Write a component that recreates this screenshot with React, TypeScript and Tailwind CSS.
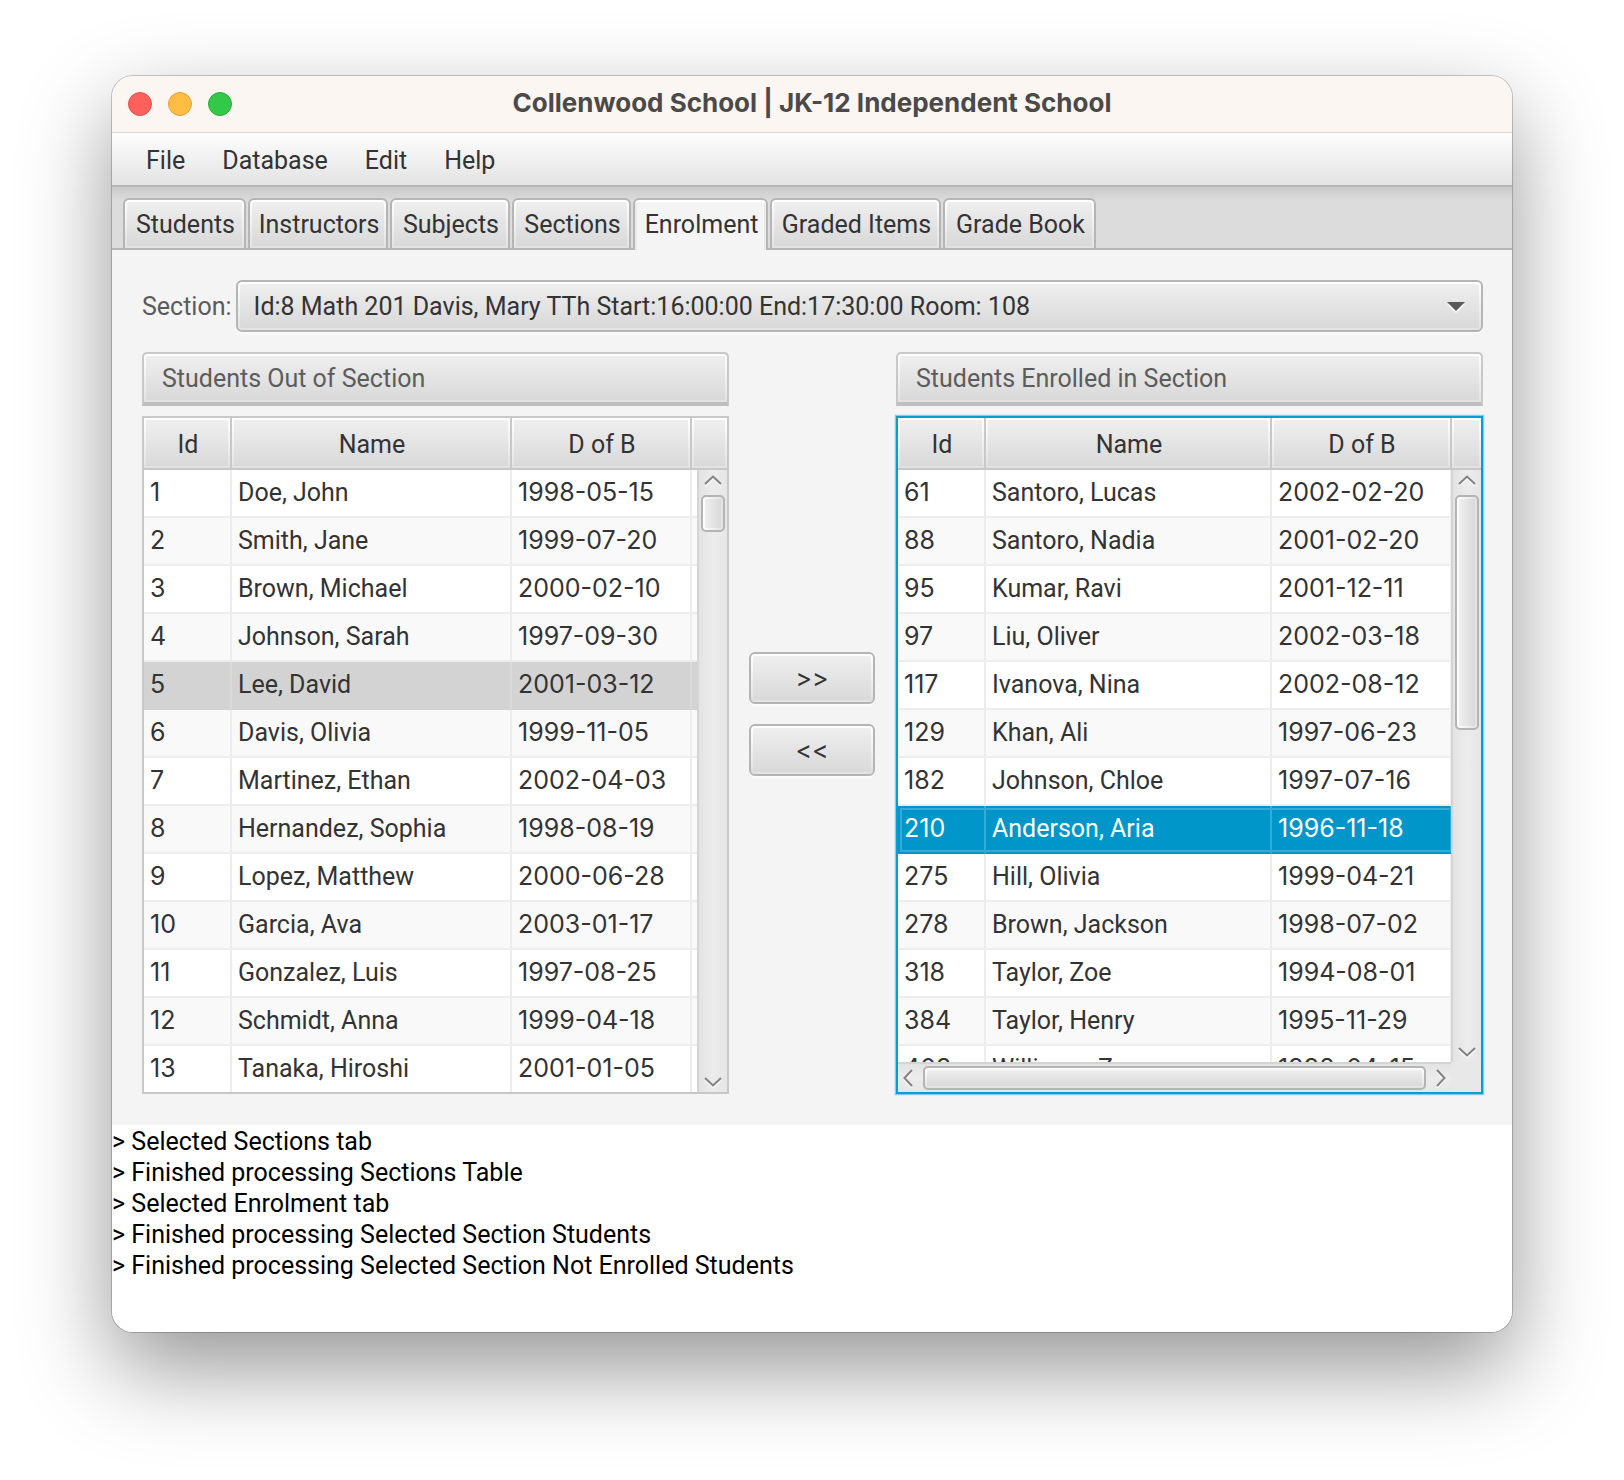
import React from "react";

type Student = [id: number, name: string, dob: string];

const menus = ["File", "Database", "Edit", "Help"];

const tabs = [
  { label: "Students", width: "w-[123px]" },
  { label: "Instructors", width: "w-[140px]" },
  { label: "Subjects", width: "w-[120px]" },
  { label: "Sections", width: "w-[119px]" },
  { label: "Enrolment", width: "w-[135px]" },
  { label: "Graded Items", width: "w-[171px]" },
  { label: "Grade Book", width: "w-[153px]" },
];

const outOfSection: Student[] = [
  [1, "Doe, John", "1998-05-15"],
  [2, "Smith, Jane", "1999-07-20"],
  [3, "Brown, Michael", "2000-02-10"],
  [4, "Johnson, Sarah", "1997-09-30"],
  [5, "Lee, David", "2001-03-12"],
  [6, "Davis, Olivia", "1999-11-05"],
  [7, "Martinez, Ethan", "2002-04-03"],
  [8, "Hernandez, Sophia", "1998-08-19"],
  [9, "Lopez, Matthew", "2000-06-28"],
  [10, "Garcia, Ava", "2003-01-17"],
  [11, "Gonzalez, Luis", "1997-08-25"],
  [12, "Schmidt, Anna", "1999-04-18"],
  [13, "Tanaka, Hiroshi", "2001-01-05"],
];

const enrolled: Student[] = [
  [61, "Santoro, Lucas", "2002-02-20"],
  [88, "Santoro, Nadia", "2001-02-20"],
  [95, "Kumar, Ravi", "2001-12-11"],
  [97, "Liu, Oliver", "2002-03-18"],
  [117, "Ivanova, Nina", "2002-08-12"],
  [129, "Khan, Ali", "1997-06-23"],
  [182, "Johnson, Chloe", "1997-07-16"],
  [210, "Anderson, Aria", "1996-11-18"],
  [275, "Hill, Olivia", "1999-04-21"],
  [278, "Brown, Jackson", "1998-07-02"],
  [318, "Taylor, Zoe", "1994-08-01"],
  [384, "Taylor, Henry", "1995-11-29"],
  [403, "Williams, Zoe", "1998-04-15"],
];

const log = [
  "Selected Sections tab",
  "Finished processing Sections Table",
  "Selected Enrolment tab",
  "Finished processing Selected Section Students",
  "Finished processing Selected Section Not Enrolled Students",
];

/* Raised surface: a bright two-pixel rim around a soft vertical gradient. */
const raised =
  "p-0.5 bg-[linear-gradient(#efefef,#d9d9d9),linear-gradient(#ffffff,#e2e2e2)] [background-clip:content-box,padding-box] [background-origin:content-box,padding-box]";
const raisedSide =
  "p-0.5 bg-[linear-gradient(90deg,#efefef,#d9d9d9),linear-gradient(90deg,#ffffff,#e2e2e2)] [background-clip:content-box,padding-box] [background-origin:content-box,padding-box]";

function Arrow({ d, wide }: { d: string; wide?: boolean }) {
  return (
    <svg
      aria-hidden="true"
      width={wide ? 18 : 10}
      height={wide ? 10 : 18}
      viewBox={wide ? "0 0 18 10" : "0 0 10 18"}
      fill="none"
      stroke="#838383"
      strokeWidth="2"
      className="drop-shadow-[0_2px_0_rgba(255,255,255,0.6)]"
    >
      <path d={d} />
    </svg>
  );
}

function VerticalBar({ thumb, bottom }: { thumb: string; bottom: string }) {
  return (
    <div
      className={`absolute right-0 top-[52px] flex w-[30px] flex-col items-center border-l-2 border-[#d4d4d4] bg-[linear-gradient(90deg,#e3e3e3,#ececec_50%,#e6e6e6)] pb-[5px] pt-[5px] ${bottom}`}
    >
      <button type="button" aria-label="Scroll up" className="flex">
        <Arrow wide d="M1 9 L9 1.5 L17 9" />
      </button>
      <div className={`mt-[10px] w-6 shrink-0 rounded-[5px] border-2 border-[#b4b4b4] ${raisedSide} ${thumb}`} />
      <button type="button" aria-label="Scroll down" className="mt-auto flex">
        <Arrow wide d="M1 1 L9 8.5 L17 1" />
      </button>
    </div>
  );
}

function HorizontalBar() {
  return (
    <div className="absolute inset-x-0 bottom-0 flex h-[30px] bg-[#e8e8e8]">
      <div className="flex flex-1 items-center border-t-2 border-[#d4d4d4] bg-[linear-gradient(#e3e3e3,#ececec_50%,#e6e6e6)] px-[5px]">
        <button type="button" aria-label="Scroll left" className="flex">
          <Arrow d="M9 1 L1.5 9 L9 17" />
        </button>
        <div className={`mx-[10px] h-6 flex-1 rounded-[5px] border-2 border-[#b4b4b4] ${raised}`} />
        <button type="button" aria-label="Scroll right" className="flex">
          <Arrow d="M1 1 L8.5 9 L1 17" />
        </button>
      </div>
      <div className="w-[30px]" />
    </div>
  );
}

function PaneTitle({ children }: { children: React.ReactNode }) {
  return (
    <h2
      className={`rounded-t-[5px] border-2 border-b-4 border-[#c8c8c8] border-b-[#bebebe] text-[#5c5c5c] ${raised}`}
    >
      <span className="block px-4 pb-1 pt-1.5 leading-[34px]">{children}</span>
    </h2>
  );
}

function StudentTable({
  label,
  rows,
  selected,
  focused,
}: {
  label: string;
  rows: Student[];
  selected: number;
  focused?: boolean;
}) {
  const frame = focused
    ? "border-[#039ed3] shadow-[0_0_0_1px_#86cce4,0_0_0_2px_#dcecf2]"
    : "border-[#c8c8c8]";
  const head = `h-[52px] border-b-2 border-[#c8c8c8] text-center font-normal ${raised}`;
  return (
    <div className={`relative h-[678px] overflow-hidden border-2 bg-white ${frame}`}>
      <table aria-label={label} className="w-full table-fixed border-separate border-spacing-0">
        <colgroup>
          <col className="w-[88px]" />
          <col />
          <col className="w-[180px]" />
          <col className={focused ? "w-[29px]" : "w-[35px]"} />
        </colgroup>
        <thead>
          <tr>
            {["Id", "Name", "D of B"].map((title) => (
              <th key={title} scope="col" className={`${head} border-r-2`}>
                <span className="block pl-0.5 pt-1">{title}</span>
              </th>
            ))}
            <td className={head} />
          </tr>
        </thead>
        <tbody>
          {rows.map(([id, name, dob], index) => {
            const isSelected = id === selected;
            const active = isSelected && focused;
            const tone = active
              ? "bg-[#0096c9] text-white"
              : isSelected
                ? "bg-[#d3d3d3]"
                : index % 2
                  ? "bg-[#f9f9f9]"
                  : "bg-white";
            const line = active
              ? "border-r-[#33abd4] border-b-[#0096c9]"
              : isSelected
                ? "border-r-[#dadada] border-b-[#d3d3d3]"
                : "border-[#ededed]";
            const cell = `h-12 border-b-2 border-r-2 pl-1.5 pr-0 pt-0 ${line}`;
            const mid = active ? "shadow-[inset_0_2px_0_#0096c9,inset_0_4px_0_#33abd4,inset_0_-2px_0_#33abd4]" : "";
            return (
              <tr key={id} className={tone} aria-selected={isSelected}>
                <td
                  className={`${cell} pb-0.5 font-['Inter','Liberation_Sans',sans-serif] ${active ? "shadow-[inset_2px_2px_0_#0096c9,inset_4px_4px_0_#33abd4,inset_0_-2px_0_#33abd4]" : ""}`}
                >
                  {id}
                </td>
                <td className={`${cell} pb-0 ${mid}`}>{name}</td>
                <td className={`${cell} pb-0.5 font-['Inter','Liberation_Sans',sans-serif] ${mid}`}>{dob}</td>
                <td className={`h-12 border-b-2 ${line}`} />
              </tr>
            );
          })}
        </tbody>
      </table>
      <VerticalBar
        thumb={focused ? "h-[235px]" : "h-[37px]"}
        bottom={focused ? "bottom-[30px]" : "bottom-0"}
      />
      {focused && <HorizontalBar />}
    </div>
  );
}

function MoveButton({ label, children }: { label: string; children: string }) {
  return (
    <button
      type="button"
      aria-label={label}
      className={`h-[52px] w-[126px] rounded-md border-2 border-[#b5b5b5] font-['Inter','Liberation_Sans',sans-serif] shadow-[0_2px_0_#fafafa] ${raised}`}
    >
      {children}
    </button>
  );
}

export default function App() {
  return (
    <div className="min-h-screen bg-white px-28 pb-[148px] pt-[76px] font-['Roboto','Liberation_Sans',sans-serif] text-[25px] leading-[30px] text-[#333333]">
      <main className="overflow-hidden rounded-[21px] bg-[#f4f4f4] shadow-[0_0_0_1px_rgba(0,0,0,0.2),0_36px_90px_rgba(0,0,0,0.42)]">
        <header className="relative flex h-[57px] items-center justify-center border-b border-[#d9d7d5] bg-[#fcf6f2]">
          <div className="absolute left-4 flex gap-4">
            <button type="button" aria-label="Close" className="size-6 rounded-full border border-[#e2514c] bg-[#ff605c]" />
            <button type="button" aria-label="Minimize" className="size-6 rounded-full border border-[#dfa137] bg-[#ffbd44]" />
            <button type="button" aria-label="Zoom" className="size-6 rounded-full border border-[#2bac3a] bg-[#34c84a]" />
          </div>
          <h1 className="pb-0.5 font-['Inter','Liberation_Sans',sans-serif] text-[26px] font-bold text-[#4b4a48]">
            Collenwood School | JK-12 Independent School
          </h1>
        </header>

        <nav aria-label="Main menu" className="flex h-[54px] items-center gap-[37px] border-b-2 border-[#b4b4b4] bg-[linear-gradient(#fdfdfd,#e3e3e3)] px-[34px] pt-1">
          {menus.map((menu) => (
            <button key={menu} type="button">{menu}</button>
          ))}
        </nav>

        <div role="tablist" className="flex h-[63px] items-end gap-0.5 bg-[linear-gradient(#b5b5b5,#b5b5b5),linear-gradient(#c9c9c9,#dcdcdc_14px,#dcdcdc)] bg-[size:100%_2px,100%_100%] bg-[position:bottom,top] bg-no-repeat px-[11px]">
          {tabs.map(({ label, width }) => {
            const active = label === "Enrolment";
            return (
              <button
                key={label}
                type="button"
                role="tab"
                aria-selected={active}
                className={`h-[52px] whitespace-nowrap rounded-t-md border-2 border-[#b5b5b5] ${width} ${active ? "border-b-0 bg-[#f4f4f4] shadow-[inset_0_2px_0_#ffffff,inset_2px_0_0_#e9e9e9,inset_-2px_0_0_#e9e9e9] p-0.5 pb-1" : raised}`}
              >
                <span className="block pl-0.5 pt-0.5">{label}</span>
              </button>
            );
          })}
        </div>

        <section className="pb-[31px] pl-[30px] pr-[29px] pt-[30px]">
          <div className="flex items-center gap-1">
            <label htmlFor="section" className="pt-0.5 text-[#5a5a5a]">Section:</label>
            <div className={`relative h-[52px] flex-1 rounded-md border-2 border-[#b5b5b5] shadow-[0_2px_0_#fafafa] ${raised}`}>
              <select id="section" className="h-full w-full appearance-none bg-transparent pl-3.5 pr-14 pt-0.5">
                <option>Id:8 Math 201 Davis, Mary TTh Start:16:00:00 End:17:30:00 Room: 108</option>
              </select>
              <svg aria-hidden="true" width="18" height="11" viewBox="0 0 18 11" className="pointer-events-none absolute right-4 top-5">
                <path d="M0 2 H18 L9 11 Z" fill="#fff" />
                <path d="M0 0 H18 L9 9 Z" fill="#595959" />
              </svg>
            </div>
          </div>

          <div className="mt-5 grid grid-cols-[1fr_127px_1fr] gap-5">
            <div className="flex min-w-0 flex-col gap-2.5">
              <PaneTitle>Students Out of Section</PaneTitle>
              <StudentTable label="Students Out of Section" rows={outOfSection} selected={5} />
            </div>
            <div className="flex flex-col items-start justify-center gap-5 pb-[18px]">
              <MoveButton label="Enrol student">{">>"}</MoveButton>
              <MoveButton label="Remove student">{"<<"}</MoveButton>
            </div>
            <div className="flex min-w-0 flex-col gap-2.5">
              <PaneTitle>Students Enrolled in Section</PaneTitle>
              <StudentTable label="Students Enrolled in Section" rows={enrolled} selected={210} focused />
            </div>
          </div>
        </section>

        <ul aria-label="Log" className="h-[207px] bg-white pt-px leading-[31px] text-black">
          {log.map((line) => (
            <li key={line}>&gt; {line}</li>
          ))}
        </ul>
      </main>
    </div>
  );
}
